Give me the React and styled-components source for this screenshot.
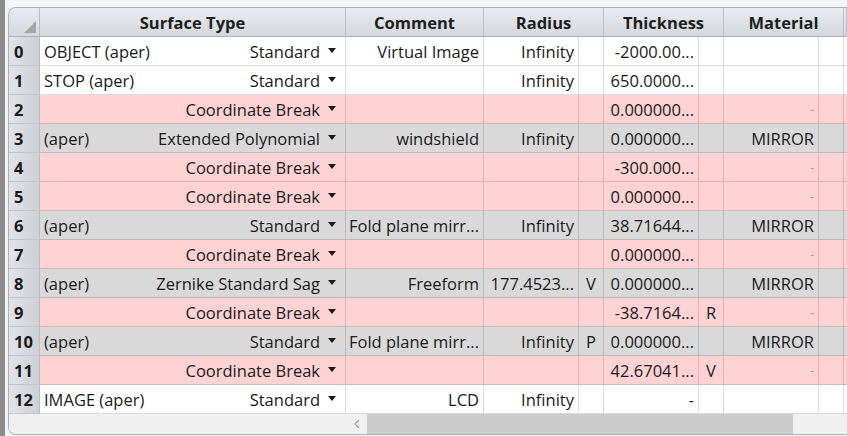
import styled, { createGlobalStyle } from 'styled-components';

const GlobalStyle = createGlobalStyle`
  html, body {
    margin: 0;
    padding: 0;
    overflow: hidden;
    background: #f4f5f6;
  }
`;

const COLS = '31px 306px 138px 95px 25px 95px 25px 95px 25px 1fr';

const rows = [
  { kind: 'white', name: 'OBJECT (aper)', type: 'Standard', comment: 'Virtual Image', radius: 'Infinity', thick: '-2000.00...' },
  { kind: 'white', name: 'STOP (aper)', type: 'Standard', radius: 'Infinity', thick: '650.0000...' },
  { kind: 'pink', type: 'Coordinate Break', thick: '0.000000...', material: '-' },
  { kind: 'gray', name: '(aper)', type: 'Extended Polynomial', comment: 'windshield', radius: 'Infinity', thick: '0.000000...', material: 'MIRROR' },
  { kind: 'pink', type: 'Coordinate Break', thick: '-300.000...', material: '-' },
  { kind: 'pink', type: 'Coordinate Break', thick: '0.000000...', material: '-' },
  { kind: 'gray', name: '(aper)', type: 'Standard', comment: 'Fold plane mirr...', radius: 'Infinity', thick: '38.71644...', material: 'MIRROR' },
  { kind: 'pink', type: 'Coordinate Break', thick: '0.000000...', material: '-' },
  { kind: 'gray', name: '(aper)', type: 'Zernike Standard Sag', comment: 'Freeform', radius: '177.4523...', rsolve: 'V', thick: '0.000000...', material: 'MIRROR' },
  { kind: 'pink', type: 'Coordinate Break', thick: '-38.7164...', tsolve: 'R', material: '-' },
  { kind: 'gray', name: '(aper)', type: 'Standard', comment: 'Fold plane mirr...', radius: 'Infinity', rsolve: 'P', thick: '0.000000...', material: 'MIRROR' },
  { kind: 'pink', type: 'Coordinate Break', thick: '42.67041...', tsolve: 'V', material: '-' },
  { kind: 'white', name: 'IMAGE (aper)', type: 'Standard', comment: 'LCD', radius: 'Infinity', thick: '-', thickDash: true },
];

const bg = { white: '#ffffff', pink: '#ffd3d3', gray: '#d9d9d9' };

const Page = styled.div`
  width: 847px;
  height: 436px;
  overflow: hidden;
  border-left: 5px solid #8e8e8e;
  padding: 7px 0 0 3px;
  box-sizing: border-box;
  font-family: 'Open Sans', 'Noto Sans', sans-serif;
`;

const Panel = styled.div`
  border: 1px solid #a9b3c0;
  border-right: none;
  border-radius: 8px 0 0 8px;
  overflow: hidden;
  background: #f0f0f0;
`;

const Row = styled.div`
  display: grid;
  grid-template-columns: ${COLS};
  height: 29px;
  background: ${(p) => bg[p.$kind] || 'transparent'};
`;

const HeaderRow = styled(Row)`
  height: 29px;
  background: linear-gradient(#e9ecef, #d3d7dc);
`;

const HeadCell = styled.div`
  grid-column: span ${(p) => p.$span || 1};
  display: flex;
  align-items: center;
  justify-content: center;
  font-weight: 700;
  font-size: 16.5px;
  color: #1e1e1e;
  border-right: 1px solid #b9bec6;
  border-bottom: 1px solid #a9b0ba;
  position: relative;
`;

const Corner = styled.div`
  position: absolute;
  right: 3px;
  bottom: 3px;
  width: 0;
  height: 0;
  border-left: 12px solid transparent;
  border-bottom: 12px solid #a6a6a6;
`;

const NumCell = styled.div`
  display: flex;
  align-items: center;
  padding-left: 5px;
  font-weight: 700;
  font-size: 16.5px;
  color: #1a1a1a;
  background: linear-gradient(90deg, #e1e4e8, #ccd0d5);
  border-right: 1px solid #b9bec6;
  border-bottom: 1px solid #c2c6cc;
`;

const Cell = styled.div`
  display: flex;
  align-items: center;
  justify-content: ${(p) => (p.$left ? 'flex-start' : 'flex-end')};
  gap: 6px;
  padding: 1px 4px 0;
  font-size: 16.5px;
  color: #1a1a1a;
  white-space: nowrap;
  overflow: hidden;
  border-right: 1px solid rgba(0, 0, 0, 0.14);
  border-bottom: 1px solid rgba(0, 0, 0, 0.14);
`;

const TypeCell = styled(Cell)`
  justify-content: space-between;
  padding-right: 9px;
`;

const TypeValue = styled.span`
  display: flex;
  align-items: center;
  gap: 8px;
  margin-left: auto;
`;

const Arrow = styled.span`
  width: 0;
  height: 0;
  border-left: 4px solid transparent;
  border-right: 4px solid transparent;
  border-top: 5px solid #1a1a1a;
  margin-top: -2px;
`;

const Solve = styled(Cell)`
  justify-content: center;
  padding: 1px 0 0;
`;

const Dash = styled.span`
  color: ${(p) => (p.$faint ? '#a0a0a0' : '#1a1a1a')};
  font-size: ${(p) => (p.$faint ? '12px' : '16px')};
`;

const ScrollBar = styled.div`
  display: flex;
  height: 20px;
  background: #f0f0f0;
`;

const ScrollLeft = styled.div`
  width: 337px;
`;

const ScrollArrow = styled.div`
  width: 21px;
  display: flex;
  align-items: center;
  justify-content: center;
`;

const Thumb = styled.div`
  width: 426px;
  background: #cdcdcd;
`;

function SurfaceRow({ row, index }) {
  return (
    <Row $kind={row.kind}>
      <NumCell>{index}</NumCell>
      <TypeCell $left>
        <span>{row.name}</span>
        <TypeValue>
          {row.type}
          <Arrow />
        </TypeValue>
      </TypeCell>
      <Cell>{row.comment}</Cell>
      <Cell>{row.radius}</Cell>
      <Solve>{row.rsolve}</Solve>
      <Cell>{row.thickDash ? <Dash>-</Dash> : row.thick}</Cell>
      <Solve>{row.tsolve}</Solve>
      <Cell>{row.material === '-' ? <Dash $faint>-</Dash> : row.material}</Cell>
      <Solve />
      <Cell />
    </Row>
  );
}

export default function App() {
  return (
    <>
      <GlobalStyle />
      <Page>
        <Panel>
          <HeaderRow>
            <HeadCell>
              <Corner />
            </HeadCell>
            <HeadCell>Surface Type</HeadCell>
            <HeadCell>Comment</HeadCell>
            <HeadCell $span={2}>Radius</HeadCell>
            <HeadCell $span={2}>Thickness</HeadCell>
            <HeadCell $span={2}>Material</HeadCell>
            <HeadCell />
          </HeaderRow>
          {rows.map((row, i) => (
            <SurfaceRow key={i} row={row} index={i} />
          ))}
          <ScrollBar>
            <ScrollLeft />
            <ScrollArrow>
              <svg width="8" height="10" viewBox="0 0 8 10">
                <path d="M6 1 L2 5 L6 9" fill="none" stroke="#a6a6a6" strokeWidth="1.2" />
              </svg>
            </ScrollArrow>
            <Thumb />
          </ScrollBar>
        </Panel>
      </Page>
    </>
  );
}
